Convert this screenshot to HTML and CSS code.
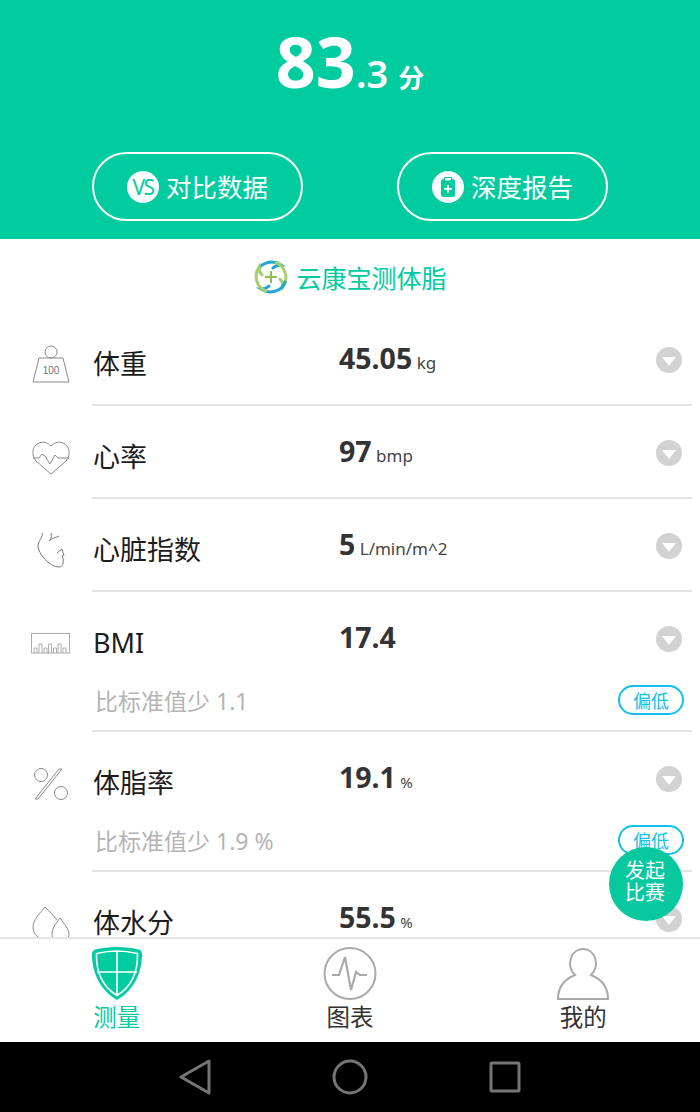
FILE: index.html
```html
<!DOCTYPE html>
<html lang="zh">
<head>
  <meta charset="UTF-8" />
  <meta name="viewport" content="width=device-width, initial-scale=1.0"/>
  <title>云康宝</title>
  <link rel="stylesheet" href="styles.css">
</head>
<body>
  <div class="app">
    <header class="score-panel">
      <div class="score"><span class="score-big">83</span><span class="score-dec">.3</span><span class="score-unit">分</span></div>
      <div class="actions">
        <div class="pill-btn">
          <span class="pill-icon"><span class="vs">VS</span></span>
          <span class="pill-text">对比数据</span>
        </div>
        <div class="pill-btn">
          <span class="pill-icon">
            <svg width="16" height="20" viewBox="0 0 16 20"><rect x="1" y="2" width="14" height="18" rx="2.500" fill="#00cca0"/><rect x="4.500" y=".5" width="7" height="3.500" rx="1" fill="#fff" stroke="#00cca0" stroke-width="1.200"/><path d="M8 8v7.500M4.200 11.800h7.600" stroke="#fff" stroke-width="1.800"/></svg>
          </span>
          <span class="pill-text">深度报告</span>
        </div>
      </div>
    </header>

    <main class="list">
      <div class="brand">
        <svg width="36" height="36" viewBox="0 0 36 36" fill="none" stroke-width="3" stroke-linecap="round">
          <path d="M4 13C7 4 19 0 28 6C25 6 22 7 20 9" stroke="#1ea6d6"/>
          <path d="M4 13C7 4 19 0 28 6C25 6 22 7 20 9" stroke="#a9cf6a" transform="rotate(90 18 18)"/>
          <path d="M4 13C7 4 19 0 28 6C25 6 22 7 20 9" stroke="#1ea6d6" transform="rotate(180 18 18)"/>
          <path d="M4 13C7 4 19 0 28 6C25 6 22 7 20 9" stroke="#a9cf6a" transform="rotate(270 18 18)"/>
          <path d="M18 12v12M12 18h12" stroke="#8fbf4d" stroke-width="2" stroke-linecap="butt"/>
        </svg>
        <span>云康宝测体脂</span>
      </div>

      <section class="row">
        <div class="row-icon icon-weight">
          <svg width="40" height="38" viewBox="0 0 40 38" fill="none" stroke="#8a8a8a" stroke-width="1"><circle cx="20" cy="7" r="6"/><path d="M8 13h24l6 24H2z"/><text x="20" y="29" font-family="Liberation Sans" font-size="10" fill="#777" stroke="none" text-anchor="middle">100</text></svg>
        </div>
        <div class="row-body">
          <div class="row-top">
            <div class="name">体重</div>
            <div class="value"><b>45.05</b> <small>kg</small></div>
            <span class="chevron"></span>
          </div>
        </div>
      </section>

      <section class="row">
        <div class="row-icon icon-heart">
          <svg width="38" height="34" viewBox="0 0 38 34" fill="none" stroke="#8a8a8a" stroke-width="1"><path d="M19 33L4 20C-1 14 0 5 7 2C12 0 16 2 19 5C22 2 26 0 31 2C38 5 39 14 34 20Z"/><path d="M1 17H7L10 13L13 15L18 23L23 14L26 17H37"/></svg>
        </div>
        <div class="row-body">
          <div class="row-top">
            <div class="name">心率</div>
            <div class="value"><b>97</b> <small>bmp</small></div>
            <span class="chevron"></span>
          </div>
        </div>
      </section>

      <section class="row">
        <div class="row-icon icon-organ">
          <svg width="28" height="36" viewBox="0 0 28 36" fill="none" stroke="#777" stroke-width="1"><path d="M5 1C7 4 1 9 1 14C1 21 12 35 22 35C27 35 27 28 25 23"/><path d="M14 1C15 5 14 7 12 9C15 6 18 6 22 4"/><path d="M20 21L25 17L27 24"/></svg>
        </div>
        <div class="row-body">
          <div class="row-top">
            <div class="name">心脏指数</div>
            <div class="value"><b>5</b> <small>L/min/m^2</small></div>
            <span class="chevron"></span>
          </div>
        </div>
      </section>

      <section class="row">
        <div class="row-icon icon-bmi">
          <svg width="40" height="21" viewBox="0 0 40 21" fill="none" stroke="#999" stroke-width=".8"><rect x=".5" y=".5" width="38" height="19.500"/><path d="M3 20V15H6V20M8 20V11H11V20M13 20V15H16V20M17.500 20V11H20.500V20M22.500 20V15H25.500V20M27 20V11H30V20M32 20V15H35V20"/></svg>
        </div>
        <div class="row-body">
          <div class="row-top">
            <div class="name">BMI</div>
            <div class="value"><b>17.4</b></div>
            <span class="chevron"></span>
          </div>
          <div class="row-sub">
            <span>比标准值少 1.1</span>
            <span class="tag">偏低</span>
          </div>
        </div>
      </section>

      <section class="row">
        <div class="row-icon icon-percent">
          <svg width="34" height="32" viewBox="0 0 34 32" fill="none" stroke="#8a8a8a" stroke-width="1"><circle cx="7" cy="7" r="6.500"/><circle cx="27" cy="25" r="6.500"/><path d="M28 1L4 31H1L25 1Z"/></svg>
        </div>
        <div class="row-body">
          <div class="row-top">
            <div class="name">体脂率</div>
            <div class="value"><b>19.1</b> <small class="pct">%</small></div>
            <span class="chevron"></span>
          </div>
          <div class="row-sub">
            <span>比标准值少 1.9 %</span>
            <span class="tag">偏低</span>
          </div>
        </div>
      </section>

      <section class="row">
        <div class="row-icon icon-water">
          <svg width="38" height="36" viewBox="0 0 38 36" fill="none" stroke="#8a8a8a" stroke-width="1"><path d="M13 1C8 7 1 14 1 21C1 29 7 33 13 33"/><path d="M13 1C17 5 21 9 25 14"/><path d="M28 12C23 18 20 23 20 28C20 33 23 36 28 36C33 36 37 33 37 28C37 23 32 18 28 12Z"/></svg>
        </div>
        <div class="row-body">
          <div class="row-top">
            <div class="name">体水分</div>
            <div class="value"><b>55.5</b> <small class="pct">%</small></div>
            <span class="chevron"></span>
          </div>
        </div>
      </section>
    </main>

    <div class="fab">发起<br>比赛</div>

    <nav class="tabbar">
      <div class="tab active">
        <svg width="50" height="53" viewBox="0 0 50 53"><path d="M25 0C33 0 41 1 47 2.500C49 3 50 5 50 7C50 26 42 43 25 53C8 43 0 26 0 7C0 5 1 3 3 2.500C9 1 17 0 25 0Z" fill="#00cca0"/><path d="M25 4C32 4 39 5 45.500 6.500C46 25 39 40 25 48.500C11 40 4 25 4.500 6.500C11 5 18 4 25 4ZM5 25H45M25 4V48.500" fill="none" stroke="#fff" stroke-width="1.600"/></svg>
        <span>测量</span>
      </div>
      <div class="tab">
        <svg width="54" height="53" viewBox="0 0 54 53" fill="none" stroke="#aaa" stroke-width="2"><circle cx="27" cy="26.500" r="25.500"/><path d="M9 28H16L22 10L28 43L33 25L37 28H44" stroke-width="2.200"/></svg>
        <span>图表</span>
      </div>
      <div class="tab">
        <svg width="52" height="53" viewBox="0 0 52 53" fill="none" stroke="#aaa" stroke-width="2"><path d="M1 52C1 39 8 32 18 28C13 23 12 17 14 11C16 5 21 2 26 2C31 2 36 5 38 11C40 17 39 23 34 28C44 32 51 39 51 52Z"/></svg>
        <span>我的</span>
      </div>
    </nav>

    <div class="sysbar">
      <svg width="32" height="36" viewBox="0 0 32 36" fill="none" stroke="#757575" stroke-width="3" stroke-linejoin="round"><path d="M30 2V34L2 18Z"/></svg>
      <svg width="36" height="36" viewBox="0 0 36 36" fill="none" stroke="#757575" stroke-width="3"><circle cx="18" cy="18" r="16"/></svg>
      <svg width="32" height="32" viewBox="0 0 32 32" fill="none" stroke="#757575" stroke-width="3" stroke-linejoin="round"><rect x="2" y="2" width="28" height="28" rx="1"/></svg>
    </div>
  </div>
</body>
</html>
```

FILE: styles.css
```css
:root {
  --green: #00cca0;
  --line: #e4e4e4;
  --text-dark: #222;
  --text-grey: #b4b4b4;
  --blue: #12bfe6;
}

* {
  margin: 0;
  padding: 0;
  box-sizing: border-box;
}

body {
  font-family: "Noto Sans", "Noto Sans CJK SC", sans-serif;
  background-color: #fff;
  color: var(--text-dark);
}

.app {
  position: relative;
  display: flex;
  flex-direction: column;
  width: 700px;
  height: 1112px;
  overflow: hidden;
}

/* top panel */
.score-panel {
  height: 239px;
  flex-shrink: 0;
  background-color: var(--green);
  color: #fff;
}

.score {
  height: 152px;
  padding-top: 11px;
  text-align: center;
  font-weight: 700;
  line-height: 100px;
}

.score-big {
  font-size: 70px;
}

.score-dec {
  font-size: 38px;
  font-weight: 600;
}

.score-unit {
  font-size: 26px;
  margin-left: 10px;
}

.actions {
  display: flex;
  justify-content: space-between;
  padding: 0 92px;
}

.pill-btn {
  display: flex;
  align-items: center;
  justify-content: center;
  gap: 7px;
  width: 211px;
  height: 69px;
  border: 2px solid #fff;
  border-radius: 35px;
  font-size: 25.500px;
}

.pill-text {
  padding-bottom: 2px;
}

.pill-icon {
  display: flex;
  align-items: center;
  justify-content: center;
  width: 32px;
  height: 32px;
  border-radius: 50%;
  background-color: #fff;
}

.vs {
  font-size: 21px;
  letter-spacing: -1.500px;
  color: var(--green);
}

/* list */
.list {
  flex: 1;
  min-height: 0;
  overflow: hidden;
}

.brand {
  display: flex;
  align-items: center;
  justify-content: center;
  gap: 7px;
  height: 74px;
  padding-top: 2px;
  font-size: 25px;
  color: var(--green);
}

.row {
  display: flex;
  margin-right: 8px;
}

.row-icon {
  display: flex;
  justify-content: center;
  width: 92px;
  padding-left: 9px;
  flex-shrink: 0;
}

.icon-weight { padding-top: 32px; }
.icon-heart { padding-top: 35px; }
.icon-organ { padding-top: 33px; }
.icon-bmi { padding-top: 41px; }
.icon-percent { padding-top: 36px; }
.icon-water { padding-top: 34px; }

.row-body {
  flex: 1;
  border-bottom: 2px solid var(--line);
}

.row-top {
  display: flex;
  height: 91px;
  padding-right: 10px;
}

.name {
  width: 247px;
  padding: 32px 0 0 1px;
  font-size: 27px;
  line-height: 38px;
  color: #1c1c1c;
}

.value {
  flex: 1;
  padding-top: 25px;
  line-height: 40px;
  font-size: 17px;
  color: #333;
}

.value b {
  font-size: 28.500px;
}

.value small {
  font-size: 17px;
  color: #444;
}

.value small.pct {
  font-size: 15px;
}

.chevron {
  position: relative;
  width: 26px;
  height: 26px;
  margin-top: 34px;
  border-radius: 50%;
  background-color: #d2d2d2;
}

.chevron::after {
  content: "";
  position: absolute;
  top: 10px;
  left: 6px;
  border-style: solid;
  border-width: 9px 7px 0;
  border-color: #fff transparent transparent;
}

.row-top:has(+ .row-sub) {
  height: 88px;
}

.row-sub {
  display: flex;
  justify-content: space-between;
  align-items: center;
  height: 50px;
  padding: 0 8px 10px 3px;
  font-size: 23px;
  color: var(--text-grey);
}

.tag {
  display: flex;
  align-items: center;
  justify-content: center;
  width: 66px;
  height: 30px;
  border: 2px solid var(--blue);
  border-radius: 15px;
  font-size: 18px;
  color: var(--blue);
}

.fab {
  position: absolute;
  left: 609px;
  top: 847px;
  width: 74px;
  height: 74px;
  padding: 13px 2px 0 0;
  border-radius: 50%;
  background-color: #07c89e;
  color: #fff;
  font-size: 20px;
  line-height: 22px;
  text-align: center;
}

/* bottom tabs */
.tabbar {
  display: flex;
  height: 105px;
  flex-shrink: 0;
  padding-top: 8px;
  border-top: 2px solid var(--line);
  background-color: #fff;
}

.tab {
  display: flex;
  flex-direction: column;
  align-items: center;
  flex: 1;
  font-size: 23.500px;
  line-height: 30px;
  color: #333;
}

.tab svg {
  margin-bottom: 2px;
}

.tab.active {
  color: var(--green);
}

.sysbar {
  display: flex;
  align-items: center;
  justify-content: center;
  gap: 121px;
  height: 70px;
  flex-shrink: 0;
  background-color: #000;
}
```
